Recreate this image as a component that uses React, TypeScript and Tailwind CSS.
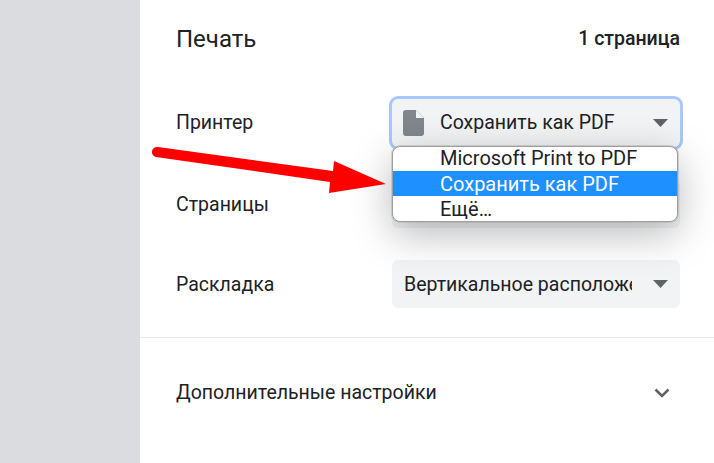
import React from "react";

const Caret = () => (
  <svg width="15" height="8" viewBox="0 0 15 8" className="shrink-0"><path d="M0 0h15L7.5 8z" fill="#5f6368" /></svg>
);

const Item = ({ children, active, first }: { children: React.ReactNode; active?: boolean; first?: boolean }) => (
  <div className={`pl-[47px] text-[20px] whitespace-nowrap ${first ? "h-[24px] leading-[23px]" : "h-[25px] pt-[2px] leading-[23px]"} ${active ? "bg-[#1e90ff] text-white" : "text-[#202124]"}`}>{children}</div>
);

export default function App() {
  return (
    <div className="relative flex h-[463px] w-[714px] overflow-hidden bg-white font-['Roboto',sans-serif] text-[19.5px] text-[#202124]">
      <div className="w-[140px] shrink-0 bg-[#dadce0]" />
      <div className="flex flex-1 flex-col">
        <div className="flex h-[99px] items-start justify-between pl-[36px] pr-[34px] pt-[24px]">
          <h1 className="text-[24px] leading-[30px]">Печать</h1>
          <span className="pt-[3px] text-[19.5px] font-medium leading-[24px]">1 страница</span>
        </div>
        <div className="flex flex-col pl-[36px] pr-[34px]">
          <div className="relative z-20 flex h-[48px] items-center justify-between">
            <span className="leading-[48px]">Принтер</span>
            <div className="relative h-[48px] w-[288px]">
              <div className="absolute inset-0 flex items-center rounded-[6px] bg-[#f1f3f4] pl-[11px] pr-[12px] outline-[3px] outline-[#a8c7fa]">
                <svg width="21" height="26" viewBox="0 0 21 26" className="shrink-0">
                  <path d="M3 0h10l8 8v15a3 3 0 0 1-3 3H3a3 3 0 0 1-3-3V3a3 3 0 0 1 3-3z" fill="#80868b" />
                  <path d="M13 0v8h8z" fill="#f1f3f4" />
                </svg>
                <span className="ml-[16px] flex-1 whitespace-nowrap">Сохранить как PDF</span>
                <Caret />
              </div>
              <div className="absolute left-0 top-[47px] w-[286px] overflow-hidden rounded-[8px] border border-[#9e9e9e] bg-white shadow-[0_0_0_1px_rgba(170,170,170,0.45),0_12px_40px_rgba(0,0,0,0.28)]">
                <Item first>Microsoft Print to PDF</Item>
                <Item active>Сохранить как PDF</Item>
                <Item>Ещё…</Item>
              </div>
            </div>
          </div>
          <div className="mt-[33px] flex h-[48px] items-center justify-between">
            <span className="pt-[2px]">Страницы</span>
            <div className="h-[48px] w-[288px] rounded-[6px] bg-[#f1f3f4]" />
          </div>
          <div className="mt-[32px] flex h-[48px] items-center justify-between">
            <span className="pt-[2px]">Раскладка</span>
            <div className="flex h-[48px] w-[288px] items-center rounded-[6px] bg-[#f1f3f4] pl-[12px] pr-[12px]">
              <span className="w-[228px] overflow-hidden whitespace-nowrap pt-[2px]">Вертикальное расположение</span>
              <span className="flex-1" />
              <Caret />
            </div>
          </div>
        </div>
        <div className="mt-[29px] h-px bg-[#e8eaed]" />
        <div className="flex h-[108px] items-start justify-between pl-[36px] pr-[44px] pt-[43px]">
          <span className="leading-[24px]">Дополнительные настройки</span>
          <svg width="16" height="10" viewBox="0 0 16 10" className="mt-[7px]"><path d="M1.5 1.5 8 8l6.5-6.5" fill="none" stroke="#5f6368" strokeWidth="2.6" /></svg>
        </div>
      </div>
      <svg width="714" height="463" viewBox="0 0 714 463" className="pointer-events-none absolute inset-0 z-30">
        <path d="M158 147 333 171 334 161 386 184 329 193 330 182 156 157a5 5 0 0 1 2-10z" fill="#ff0000" />
      </svg>
    </div>
  );
}
